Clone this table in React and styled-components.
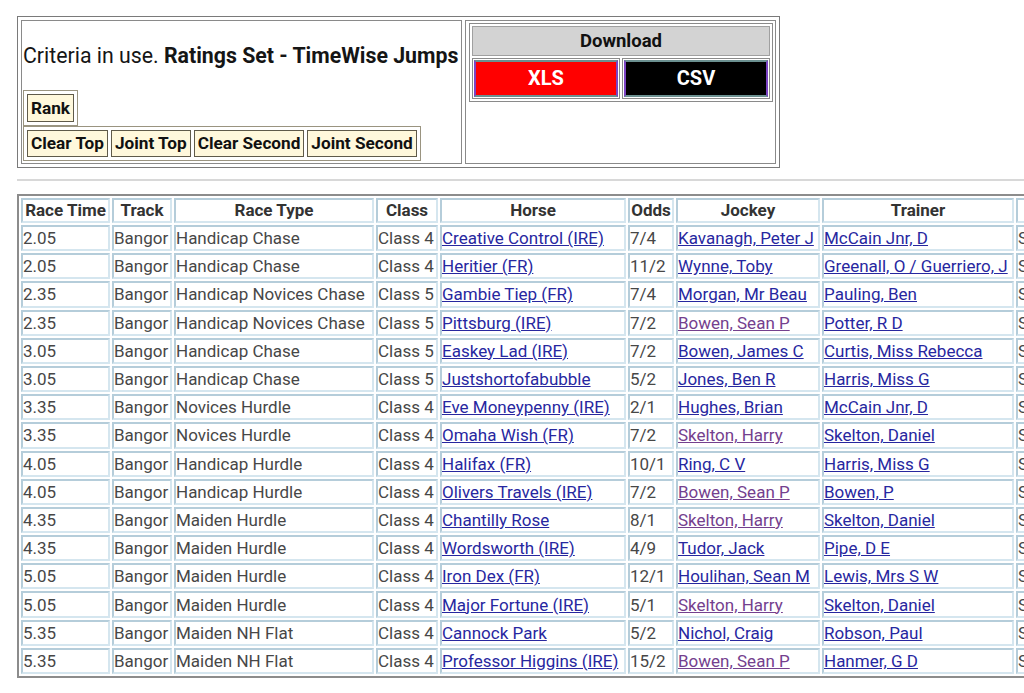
import React from "react";
import styled, { createGlobalStyle } from "styled-components";

const Global = createGlobalStyle`
  html, body { margin: 0; padding: 0; overflow: hidden; background: #fff; }
  body { font-family: Roboto, "Noto Sans", Arial, sans-serif; color: #111; }
`;

const Page = styled.div`
  width: max-content;
  padding: 16px 0 0 17px;
`;

const TopTable = styled.table`
  border: 1px solid #7a7a7a;
  border-spacing: 3px 3px;
  width: 763px;
  box-sizing: border-box;
`;

const CriteriaCell = styled.td`
  border: 1px solid #8a8a8a;
  padding: 0 2px 2px 1px;
  width: 442px;
  box-sizing: border-box;
  vertical-align: top;
`;

const DownloadCell = styled.td`
  border: 1px solid #8a8a8a;
  padding: 2px 2px 2px 3px;
  vertical-align: top;
  box-sizing: border-box;
`;

const Criteria = styled.div`
  height: 69px;
  box-sizing: border-box;
  padding-top: 23px;
  font-size: 21.3px;
  line-height: 24px;
  color: #151515;
  white-space: nowrap;
  b { font-weight: 700; }
`;

const BtnTable = styled.table`
  border: 1px solid #9a9480;
  border-spacing: 3px;
`;

const Btn = styled.td`
  border: 1px solid #5f5a4a;
  background: #fff8dc;
  font-size: 17.2px;
  font-weight: 700;
  line-height: ${(p) => p.$lh || 26}px;
  padding: 0 3px;
  color: #111;
  white-space: nowrap;
`;

const DlTable = styled.table`
  border: 1px solid #8a8a8a;
  border-spacing: 2px;
  width: 304px;
`;

const DlHead = styled.td`
  background: #d3d3d3;
  border: 1px solid #a0a0a0;
  text-align: center;
  font-size: 18.5px;
  font-weight: 700;
  line-height: 26px;
  color: #111;
`;

const DlBtnCell = styled.td`
  border: 1px solid #8a8a8a;
  padding: 1px;
  width: 50%;
`;

const DlButton = styled.div`
  background: ${(p) => p.$bg};
  color: #fff;
  font-size: 20px;
  font-weight: 700;
  text-align: center;
  line-height: 33px;
  border-style: solid;
  border-width: 2px;
  border-color: #6b9090 #7c44c4 #6b9090 #7c44c4;
`;

const Rule = styled.div`
  margin: 11px 0 13px 0;
  border-top: 2px solid #d8d8d8;
`;

const DataTable = styled.table`
  border: 2px solid #8c8c8c;
  border-spacing: 2px;
  font-size: 17px;
  table-layout: fixed;
  width: 1113px;
`;

const Th = styled.th`
  box-sizing: border-box;
  width: ${(p) => p.$w}px;
  height: 25px;
  border-style: solid;
  border-width: 2px;
  border-color: #b5cdda #d5e6ef #d5e6ef #b5cdda;
  padding: 0 1px;
  text-align: center;
  font-weight: 700;
  color: #333;
  white-space: nowrap;
  overflow: hidden;
  line-height: 19px;
`;

const Td = styled.td`
  box-sizing: border-box;
  height: 26.2px;
  border-style: solid;
  border-width: 2px;
  border-color: #b5cdda #d5e6ef #d5e6ef #b5cdda;
  padding: 0 1px 0 0;
  color: #474747;
  white-space: nowrap;
  overflow: hidden;
  line-height: 20px;
`;

const Link = styled.a`
  color: ${(p) => (p.$visited ? "#74408e" : "#27279f")};
  text-decoration: underline;
`;

const cols = [
  ["Race Time", 89],
  ["Track", 60],
  ["Race Type", 200],
  ["Class", 62],
  ["Horse", 186],
  ["Odds", 46],
  ["Jockey", 144],
  ["Trainer", 192],
  ["Status", 110],
];

const V = "v";
const rows = [
  ["2.05", "Handicap Chase", "Class 4", "Creative Control (IRE)", "7/4", "Kavanagh, Peter J", "", "McCain Jnr, D"],
  ["2.05", "Handicap Chase", "Class 4", "Heritier (FR)", "11/2", "Wynne, Toby", "", "Greenall, O / Guerriero, J"],
  ["2.35", "Handicap Novices Chase", "Class 5", "Gambie Tiep (FR)", "7/4", "Morgan, Mr Beau", "", "Pauling, Ben"],
  ["2.35", "Handicap Novices Chase", "Class 5", "Pittsburg (IRE)", "7/2", "Bowen, Sean P", V, "Potter, R D"],
  ["3.05", "Handicap Chase", "Class 5", "Easkey Lad (IRE)", "7/2", "Bowen, James C", "", "Curtis, Miss Rebecca"],
  ["3.05", "Handicap Chase", "Class 5", "Justshortofabubble", "5/2", "Jones, Ben R", "", "Harris, Miss G"],
  ["3.35", "Novices Hurdle", "Class 4", "Eve Moneypenny (IRE)", "2/1", "Hughes, Brian", "", "McCain Jnr, D"],
  ["3.35", "Novices Hurdle", "Class 4", "Omaha Wish (FR)", "7/2", "Skelton, Harry", V, "Skelton, Daniel"],
  ["4.05", "Handicap Hurdle", "Class 4", "Halifax (FR)", "10/1", "Ring, C V", "", "Harris, Miss G"],
  ["4.05", "Handicap Hurdle", "Class 4", "Olivers Travels (IRE)", "7/2", "Bowen, Sean P", V, "Bowen, P"],
  ["4.35", "Maiden Hurdle", "Class 4", "Chantilly Rose", "8/1", "Skelton, Harry", V, "Skelton, Daniel"],
  ["4.35", "Maiden Hurdle", "Class 4", "Wordsworth (IRE)", "4/9", "Tudor, Jack", "", "Pipe, D E"],
  ["5.05", "Maiden Hurdle", "Class 4", "Iron Dex (FR)", "12/1", "Houlihan, Sean M", "", "Lewis, Mrs S W"],
  ["5.05", "Maiden Hurdle", "Class 4", "Major Fortune (IRE)", "5/1", "Skelton, Harry", V, "Skelton, Daniel"],
  ["5.35", "Maiden NH Flat", "Class 4", "Cannock Park", "5/2", "Nichol, Craig", "", "Robson, Paul"],
  ["5.35", "Maiden NH Flat", "Class 4", "Professor Higgins (IRE)", "15/2", "Bowen, Sean P", V, "Hanmer, G D"],
];

export default function App() {
  return (
    <>
      <Global />
      <Page>
        <TopTable>
          <tbody>
            <tr>
              <CriteriaCell>
                <Criteria>
                  Criteria in use. <b>Ratings Set - TimeWise Jumps</b>
                </Criteria>
                <BtnTable>
                  <tbody>
                    <tr>
                      <Btn $lh={26}>Rank</Btn>
                    </tr>
                  </tbody>
                </BtnTable>
                <BtnTable>
                  <tbody>
                    <tr>
                      <Btn $lh={25}>Clear Top</Btn>
                      <Btn $lh={25}>Joint Top</Btn>
                      <Btn $lh={25}>Clear Second</Btn>
                      <Btn $lh={25}>Joint Second</Btn>
                    </tr>
                  </tbody>
                </BtnTable>
              </CriteriaCell>
              <DownloadCell>
                <DlTable>
                  <tbody>
                    <tr>
                      <DlHead colSpan={2}>Download</DlHead>
                    </tr>
                    <tr>
                      <DlBtnCell>
                        <DlButton $bg="#ff0000">XLS</DlButton>
                      </DlBtnCell>
                      <DlBtnCell>
                        <DlButton $bg="#000000">CSV</DlButton>
                      </DlBtnCell>
                    </tr>
                  </tbody>
                </DlTable>
              </DownloadCell>
            </tr>
          </tbody>
        </TopTable>
        <Rule />
        <DataTable>
          <tbody>
            <tr>
              {cols.map(([h, w]) => (
                <Th key={h} $w={w}>
                  {h}
                </Th>
              ))}
            </tr>
            {rows.map((r, i) => (
              <tr key={i}>
                <Td>{r[0]}</Td>
                <Td>Bangor</Td>
                <Td>{r[1]}</Td>
                <Td>{r[2]}</Td>
                <Td>
                  <Link href="#">{r[3]}</Link>
                </Td>
                <Td>{r[4]}</Td>
                <Td>
                  <Link href="#" $visited={r[6] === V}>
                    {r[5]}
                  </Link>
                </Td>
                <Td>
                  <Link href="#">{r[7]}</Link>
                </Td>
                <Td>Selected</Td>
              </tr>
            ))}
          </tbody>
        </DataTable>
      </Page>
    </>
  );
}
